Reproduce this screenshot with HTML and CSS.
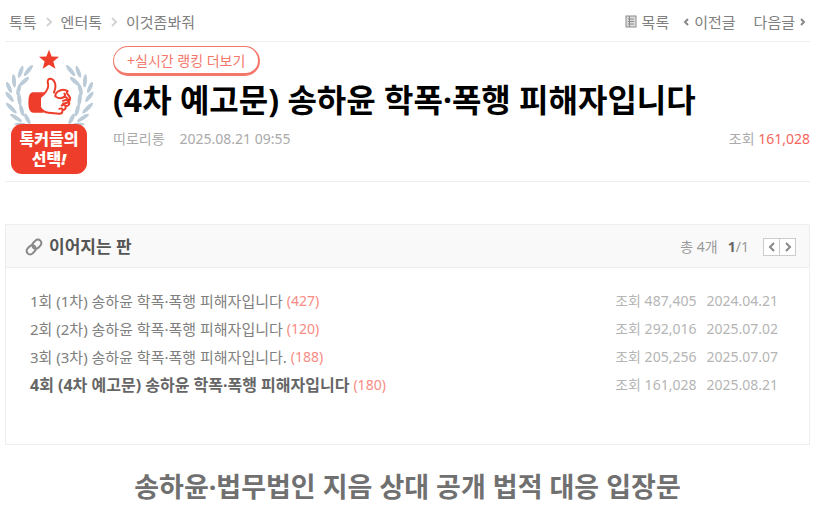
FILE: index.html
```html
<!DOCTYPE html>
<html lang="ko">
<head>
<meta charset="utf-8">
<meta name="viewport" content="width=device-width, initial-scale=1">
<title>(4차 예고문) 송하윤 학폭·폭행 피해자입니다</title>
<link rel="stylesheet" href="styles.css">
</head>
<body>
<nav class="topbar">
  <ol class="crumbs">
    <li><a href="#">톡톡</a></li>
    <li><svg class="sep" viewBox="0 0 6 10"><path d="M1 1l4 4-4 4"/></svg><a href="#">엔터톡</a></li>
    <li><svg class="sep" viewBox="0 0 6 10"><path d="M1 1l4 4-4 4"/></svg><a href="#">이것좀봐줘</a></li>
  </ol>
  <div class="pager">
    <a class="to-list" href="#"><svg class="list-icon" viewBox="0 0 12 13"><rect x="1" y="1" width="10" height="11"/><path d="M3 4h6M3 6.500h6M3 9h6M4.500 1v11"/></svg>목록</a>
    <a class="to-prev" href="#"><svg class="arrow" viewBox="0 0 6 8"><path d="M5 1L2 4l3 3"/></svg>이전글</a>
    <a class="to-next" href="#">다음글<svg class="arrow" viewBox="0 0 6 8"><path d="M1 1l3 3-3 3"/></svg></a>
  </div>
</nav>
<main>
  <header class="post">
    <div class="badge">
      <svg class="emblem" viewBox="0 0 270 230">
        <path class="red" d="M132 2l8 20 22 1-17 14 6 22-19-12-19 12 6-22-17-14 22-1z"/>
        <g id="laurel" class="leaf">
          <ellipse rx="21" ry="6" transform="translate(70 64) rotate(-51)"/>
          <ellipse rx="19" ry="6" transform="translate(47 68) rotate(-70)"/>
          <ellipse rx="20" ry="6" transform="translate(57 97) rotate(-42)"/>
          <ellipse rx="20" ry="6" transform="translate(27 95) rotate(85)"/>
          <ellipse rx="18" ry="6" transform="translate(41 121) rotate(-75)"/>
          <ellipse rx="18" ry="6" transform="translate(12 115) rotate(66)"/>
          <ellipse rx="19" ry="6" transform="translate(14 143) rotate(52)"/>
          <ellipse rx="20" ry="6" transform="translate(43 150) rotate(83)"/>
          <ellipse rx="22" ry="6" transform="translate(19 177) rotate(45)"/>
          <ellipse rx="19" ry="6" transform="translate(50 183) rotate(75)"/>
          <ellipse rx="21" ry="6" transform="translate(33 206) rotate(33)"/>
          <ellipse rx="18" ry="6" transform="translate(67 209) rotate(63)"/>
          <ellipse rx="20" ry="5" transform="translate(48 226) rotate(5)"/>
        </g>
        <use href="#laurel" transform="translate(267 0) scale(-1 1)"/>
        <path class="red" d="M82 129H118L108 144V176L116 191H84Q70 189 70 160T82 129z"/>
        <path class="hand" d="M106 144Q118 135 123 127Q133 113 128 99Q128 88 137 89Q148 91 151 106Q153 116 147 130M106 176Q113 189 131 191L163 194Q174 193 172 183Q183 182 182 172Q196 169 192 157Q199 148 191 139Q181 128 188 126Q174 117 159 127Q150 133 151 142Q166 151 176 144Q184 138 178 133M176 144Q186 141 192 157M174 155Q187 149 192 157Q184 164 174 163M170 169Q180 164 182 172M163 179Q173 175 172 183"/>
      </svg>
      <strong class="badge-text">톡커들의<br>선택<i>!</i></strong>
    </div>
    <div class="post-info">
      <a class="ranking" href="#">+실시간 랭킹 더보기</a>
      <h1>(4차 예고문) 송하윤 학폭·폭행 피해자입니다</h1>
      <div class="meta">
        <span>띠로리롱</span>
        <time>2025.08.21 09:55</time>
        <span class="views">조회 <b>161,028</b></span>
      </div>
    </div>
  </header>
  <section class="series">
    <header class="series-head">
      <svg class="link-icon" viewBox="0 0 18 18"><g transform="rotate(-45 9 9)"><rect x="0" y="5.500" width="10" height="7" rx="3.500"/><rect x="8" y="5.500" width="10" height="7" rx="3.500"/></g></svg>
      <h2>이어지는 판</h2>
      <span class="total">총 4개</span>
      <span class="page"><b>1</b>/1</span>
      <div class="buttons">
        <button type="button" aria-label="이전"><svg class="arrow" viewBox="0 0 6 8"><path d="M5 0L1 4l4 4"/></svg></button>
        <button type="button" aria-label="다음"><svg class="arrow" viewBox="0 0 6 8"><path d="M1 0l4 4-4 4"/></svg></button>
      </div>
    </header>
    <ol class="episodes">
      <li><a href="#">1회 (1차) 송하윤 학폭·폭행 피해자입니다</a><em>(427)</em><span class="count">조회 487,405</span><time>2024.04.21</time></li>
      <li><a href="#">2회 (2차) 송하윤 학폭·폭행 피해자입니다</a><em>(120)</em><span class="count">조회 292,016</span><time>2025.07.02</time></li>
      <li><a href="#">3회 (3차) 송하윤 학폭·폭행 피해자입니다.</a><em>(188)</em><span class="count">조회 205,256</span><time>2025.07.07</time></li>
      <li class="current"><a href="#">4회 (4차 예고문) 송하윤 학폭·폭행 피해자입니다</a><em>(180)</em><span class="count">조회 161,028</span><time>2025.08.21</time></li>
    </ol>
  </section>
  <h2 class="statement">송하윤·법무법인 지음 상대 공개 법적 대응 입장문</h2>
</main>
</body>
</html>
```
FILE: styles.css
```css
* { box-sizing: border-box; }
body {
  margin: 0;
  padding: 0 12px 0 5px;
  background: #fff;
  color: #808080;
  font: 14px/20px "Noto Sans", "Noto Sans CJK KR", sans-serif;
}
a { color: inherit; text-decoration: none; }
h1, h2, ol { margin: 0; padding: 0; }
ol { list-style: none; }
svg { display: block; flex: none; fill: none; overflow: visible; }

.topbar {
  display: flex;
  justify-content: space-between;
  align-items: center;
  height: 42px;
  padding: 2px 4px 0;
  border-bottom: 1px solid #eee;
  font-size: 15px;
}
.crumbs, .crumbs li, .pager, .pager a { display: flex; align-items: center; }
.sep { width: 6px; height: 10px; margin: 0 9px; stroke: #d4d4d4; stroke-width: 2; }
.arrow { width: 6px; height: 8px; stroke: #888; stroke-width: 2; }
.list-icon { width: 12px; height: 13px; fill: #ddd; stroke: #8c8c8c; stroke-width: 1; }
.pager a { gap: 5px; }
.to-prev { margin-left: 14px; }
.to-next { margin-left: 18px; }

.post {
  display: flex;
  gap: 18px;
  height: 140px;
  padding-top: 4px;
  border-bottom: 1px solid #eee;
}
.badge { width: 90px; padding-top: 3px; }
.emblem { width: 90px; height: 77px; }
.leaf { fill: #bccbd8; }
.red { fill: #ee3e2b; }
.hand { stroke: #ee3e2b; stroke-width: 6; stroke-linejoin: round; stroke-linecap: round; }
.badge-text {
  display: block;
  position: relative;
  width: 76px;
  height: 50px;
  margin: -2px 0 0 6px;
  padding-top: 5px;
  border-radius: 11px;
  background: #ee3e2b;
  color: #fff;
  font-size: 16px;
  font-weight: 900;
  line-height: 20px;
  text-align: center;
}
.post-info { flex: 1; }
.ranking {
  display: inline-block;
  height: 30px;
  padding: 4px 13px;
  border: 1px solid #f4776b;
  border-bottom-width: 3px;
  border-right-width: 2px;
  border-radius: 15px;
  color: #f4776b;
  font-size: 14px;
}
h1 { margin-top: 2px; color: #000; font-size: 32px; line-height: 44px; white-space: nowrap; }
.meta { display: flex; gap: 15px; margin-top: 7px; color: #aaa; }
.views { margin-left: auto; }
.views b { color: #f4665c; font-weight: 400; }

.series { height: 221px; margin-top: 42px; border: 1px solid #eee; }
.series-head {
  display: flex;
  align-items: center;
  height: 43px;
  padding: 2px 13px 0 19px;
  border-bottom: 1px solid #eee;
  background: #f9f9f9;
  color: #999;
}
.link-icon { width: 18px; height: 18px; stroke: #888; stroke-width: 2; }
.series-head h2 { margin: 0 auto 0 6px; color: #555; font-size: 17px; }
.page { margin: 0 14px 0 10px; }
.page b { color: #666; }
.buttons { display: flex; }
.buttons button {
  display: grid;
  place-items: center;
  width: 17px;
  height: 18px;
  padding: 0;
  border: 1px solid #ccc;
  background: #fff;
}
.buttons button + button { margin-left: -1px; }
.episodes { padding: 19px 31px 0 24px; font-size: 15px; line-height: 28px; }
.episodes li { display: flex; }
.episodes em { margin-left: 4px; color: #f98b84; font-size: 14px; font-style: normal; }
.episodes .current a { color: #666; font-size: 16px; font-weight: 700; }
.count { margin-left: auto; color: #b5b5b5; font-size: 14px; }
.episodes time { margin-left: 10px; color: #b5b5b5; font-size: 14px; }
.statement { margin-top: 25px; color: #707070; font-size: 27px; line-height: 34px; text-align: center; }
```
